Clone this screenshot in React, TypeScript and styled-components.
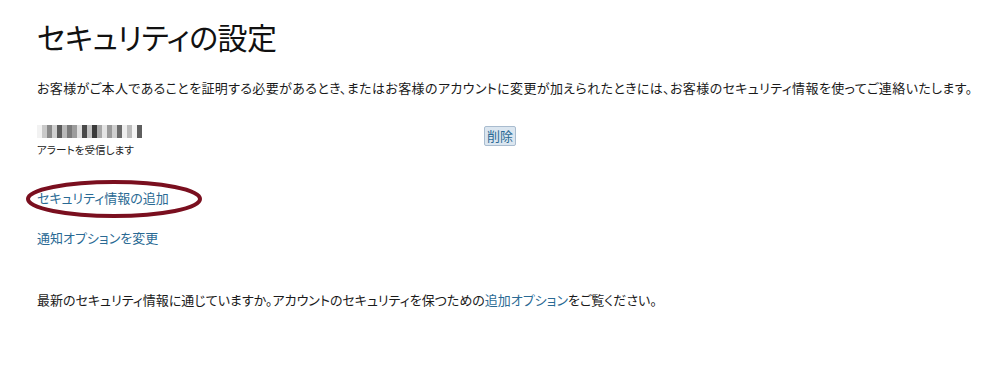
import React from 'react';
import styled, { createGlobalStyle } from 'styled-components';

const GlobalStyle = createGlobalStyle`
  html, body {
    margin: 0;
    padding: 0;
    background: #ffffff;
  }
  body {
    font-family: 'Noto Sans CJK JP', 'Noto Sans', sans-serif;
    color: #1a1a1a;
    font-feature-settings: 'palt';
  }
`;

const Page = styled.div`
  display: flex;
  flex-direction: column;
  align-items: flex-start;
  padding: 14px 0 0 37px;
  width: 1008px;
  height: 379px;
  box-sizing: border-box;
  position: relative;
`;

const Title = styled.h1`
  margin: 0;
  font-size: 30px;
  font-weight: 400;
  line-height: 44px;
  letter-spacing: -0.5px;
  color: #111;
`;

const Lead = styled.p`
  margin: 21px 0 0;
  font-size: 13px;
  line-height: 18px;
  letter-spacing: 0.38px;
  color: #1a1a1a;
`;

const InfoRow = styled.div`
  display: grid;
  grid-template-columns: 447px auto;
  align-items: start;
  margin-top: 25px;
`;

const InfoCell = styled.div`
  display: flex;
  flex-direction: column;
`;

const Mosaic = styled.div`
  display: flex;
  height: 13px;
  margin-top: 3px;
  filter: blur(0.6px);
`;

const Pixel = styled.span<{ shade: string }>`
  width: 5px;
  height: 13px;
  background: ${(p) => p.shade};
`;

const Note = styled.span`
  margin-top: 4px;
  font-size: 10.6px;
  line-height: 16px;
  color: #222;
`;

const RemoveButton = styled.a`
  display: inline-block;
  padding: 0 2px;
  font-size: 13px;
  line-height: 18px;
  color: #2a6a94;
  background: #dbe6f0;
  border: 1px solid #a9bccf;
  border-radius: 2px;
  text-decoration: none;
  cursor: pointer;
`;

const LinkItem = styled.a<{ gap: number }>`
  margin-top: ${(p) => p.gap}px;
  font-size: 13px;
  line-height: 18px;
  color: #2a6a94;
  text-decoration: none;
  cursor: pointer;
`;

const Footer = styled.p`
  margin: 44px 0 0;
  font-size: 13px;
  line-height: 18px;
  color: #1a1a1a;
`;

const InlineLink = styled.a`
  color: #2a6a94;
  text-decoration: none;
`;

const Circle = styled.svg`
  position: absolute;
  left: 24px;
  top: 178px;
  pointer-events: none;
`;

const shades = [
  '#f2f2f2', '#c9c9c9', '#8a8a8a', '#d0d0d0', '#5a5a5a', '#b8b8b8',
  '#7a7a7a', '#9c9c9c', '#e0e0e0', '#4a4a4a', '#c4c4c4', '#3a3a3a',
  '#a8a8a8', '#e4e4e4', '#9a9a9a', '#cfcfcf', '#6a6a6a', '#eeeeee',
  '#bcbcbc', '#f4f4f4', '#5e5e5e',
];

export default function App() {
  return (
    <>
      <GlobalStyle />
      <Page>
        <Title>セキュリティの設定</Title>
        <Lead>
          お客様がご本人であることを証明する必要があるとき、またはお客様のアカウントに変更が加えられたときには、お客様のセキュリティ情報を使ってご連絡いたします。
        </Lead>
        <InfoRow>
          <InfoCell>
            <Mosaic>
              {shades.map((s, i) => (
                <Pixel key={i} shade={s} />
              ))}
            </Mosaic>
            <Note>アラートを受信します</Note>
          </InfoCell>
          <div>
            <RemoveButton>削除</RemoveButton>
          </div>
        </InfoRow>
        <LinkItem gap={31}>セキュリティ情報の追加</LinkItem>
        <LinkItem gap={22}>通知オプションを変更</LinkItem>
        <Footer>
          最新のセキュリティ情報に通じていますか。アカウントのセキュリティを保つための
          <InlineLink>追加オプション</InlineLink>
          をご覧ください。
        </Footer>
        <Circle width="180" height="42" viewBox="0 0 180 42">
          <ellipse cx="90" cy="21" rx="86" ry="17" fill="none" stroke="#7a0f1f" strokeWidth="4" />
        </Circle>
      </Page>
    </>
  );
}
